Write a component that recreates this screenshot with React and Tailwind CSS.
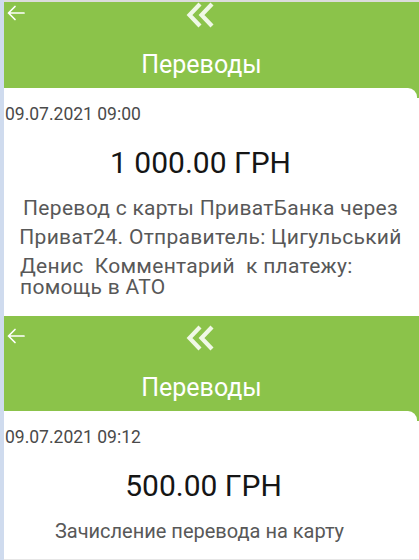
import React from 'react';

function BackArrow() {
  return (
    <svg width="18" height="16" viewBox="0 0 18 16" fill="none" stroke="white" strokeWidth="1.7" strokeLinecap="round" strokeLinejoin="round">
      <path d="M17 8H1.5M8 1.5L1.5 8L8 14.5" />
    </svg>
  );
}

function Chevrons() {
  return (
    <svg width="30" height="26" viewBox="0 0 30 26" fill="none" stroke="#f0f8e6" strokeWidth="4.2" strokeLinejoin="miter">
      <path d="M15 2L4.5 13L15 24" />
      <path d="M27 2L16.5 13L27 24" />
    </svg>
  );
}

function Header() {
  return (
    <div className="h-[95px] bg-[#8bc34a] flex flex-col">
      <div className="flex items-start h-[44px]">
        <div className="pl-[3px] pt-[12px] w-[40px]">
          <BackArrow />
        </div>
        <div className="pl-[141px] pt-[9px]">
          <Chevrons />
        </div>
      </div>
      <div className="pt-[15px] pr-[20px] text-center">
        <span className="text-white text-[25px] leading-none">Переводы</span>
      </div>
    </div>
  );
}

function Card({ date, amount, children, height, amountPad }) {
  return (
    <div className="bg-[linear-gradient(#8bc34a_0_10px,white_10px)]">
      <div className={`bg-white rounded-tr-[9px] mr-[2px] ${height}`}>
        <div className="pt-[15px] pl-[1px] text-[17.5px] leading-[22px] text-[#4a4a4a]">{date}</div>
        <div className={`pt-[20px] text-center text-[30px] leading-[36px] text-[#151515] ${amountPad}`}>{amount}</div>
        {children}
      </div>
    </div>
  );
}

export default function App() {
  return (
    <div className="w-[419px] h-[560px] overflow-hidden flex bg-white" style={{ fontFamily: 'Roboto, "Noto Sans", sans-serif' }}>
      <div className="w-[4px] bg-[#cfdbee] shrink-0" />
      <div className="flex-1 flex flex-col">
        <div className="h-[2px] bg-[#dcdcdc]" />
        <div className="h-[86px] overflow-hidden">
          <div className="-mt-[9px]">
            <Header />
          </div>
        </div>
        <Card date="09.07.2021 09:00" amount="1 000.00 ГРН" height="h-[228px]" amountPad="pr-[20px]">
          <div className="pt-[13px] text-center text-[21px] leading-[29px] tracking-[0.3px] text-[#585858]">
            Перевод с карты ПриватБанка через
            <br />
            Приват24. Отправитель: Цигульський
          </div>
          <div className="pt-[4px] pl-[16px] text-[21px] leading-[21px] tracking-[0.3px] text-[#585858] whitespace-pre">
            {'Денис  Комментарий  к платежу:\nпомощь в АТО'}
          </div>
        </Card>
        <Header />
        <Card date="09.07.2021 09:12" amount="500.00 ГРН" height="h-[148px]" amountPad="pr-[14px]">
          <div className="pt-[13px] pr-[22px] text-center text-[20px] leading-[29px] text-[#585858]">
            Зачисление перевода на карту
          </div>
        </Card>
        <div className="h-[1px] bg-[#e6e6e6]" />
      </div>
    </div>
  );
}
